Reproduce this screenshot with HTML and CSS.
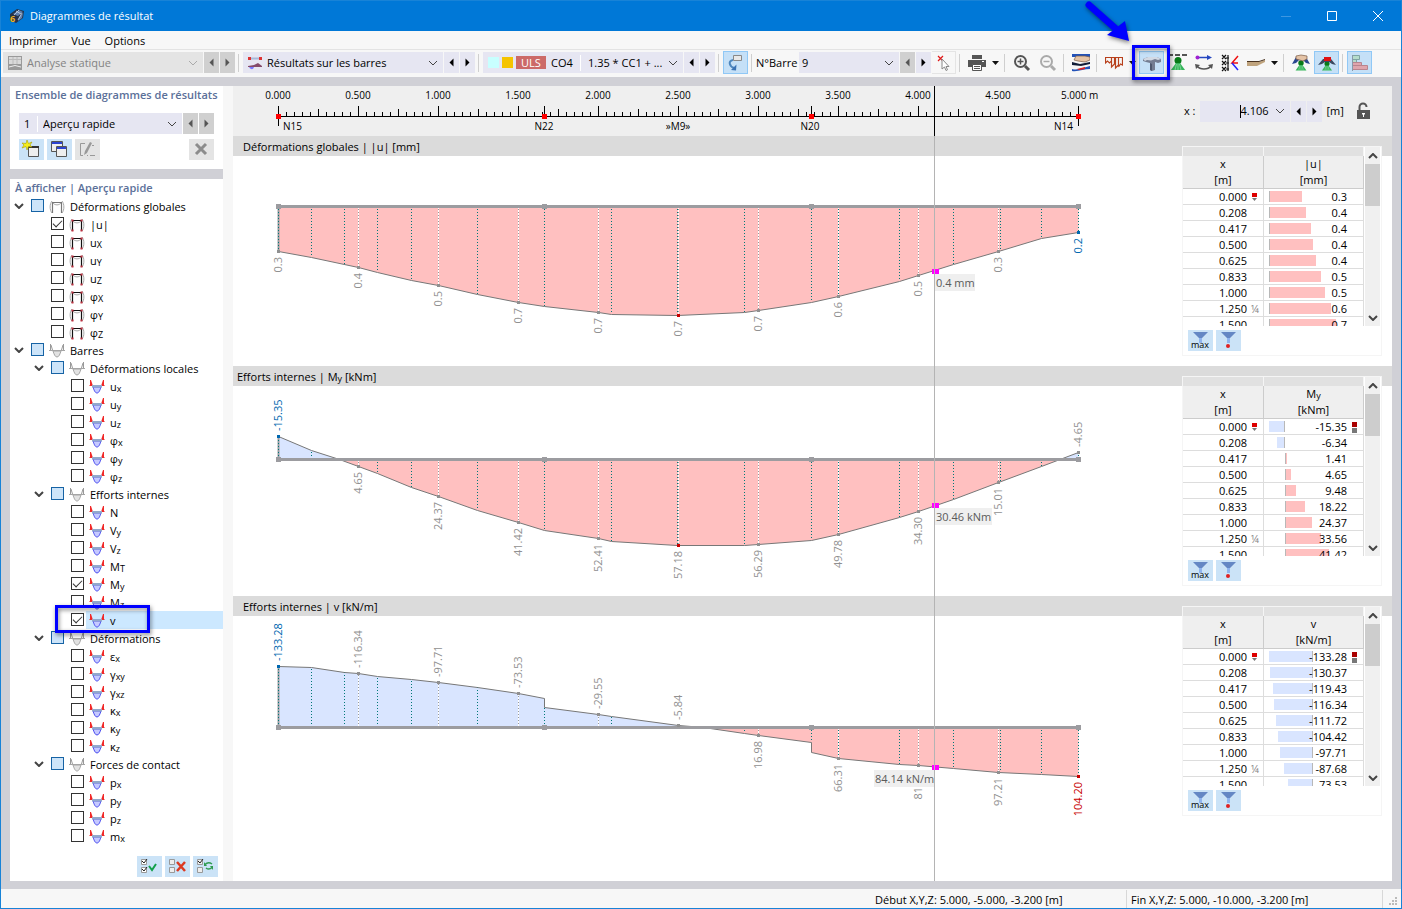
FILE: index.html
```html
<!DOCTYPE html>
<html lang="fr">
<head>
    <meta charset="UTF-8">
    <meta name="viewport" content="width=device-width, initial-scale=1.0">
    <title>Diagrammes de résultat</title>
    <link rel="stylesheet" href="styles.css">
</head>
<body>

    <!-- shared icons -->
    <svg class="sprite" aria-hidden="true">
        <symbol id="i-left" viewBox="0 0 15 21"><path d="M9.500 6.500v8L5.500 10.500z" fill="currentColor"/></symbol>
        <symbol id="i-right" viewBox="0 0 15 21"><path d="M5.500 6.500v8l4-4z" fill="currentColor"/></symbol>
        <symbol id="i-down" viewBox="0 0 10 6"><path d="M1 1l4 4 4-4" fill="none" stroke="currentColor"/></symbol>
        <symbol id="i-caret" viewBox="0 0 11 21"><path d="M2 9h7l-3.500 4z" fill="#111"/></symbol>
        <symbol id="i-frame" viewBox="0 0 16 14">
            <path d="M3 1C.5 4 .5 10 3 13M13 1c2.500 3 2.500 9 0 12M4 3c2 2.500 6 2.500 8 0" fill="none" stroke="#a9a9a9"/>
            <path d="M3.500 13V2.500h9V13" fill="none" stroke="#111" stroke-width="1.200"/>
            <path d="M2.500 1.500h2v2h-2zM11.500 1.500h2v2h-2zM2.500 11.500h2v2h-2zM11.500 11.500h2v2h-2z" fill="#c03040"/>
        </symbol>
        <symbol id="i-frame-off" viewBox="0 0 16 14">
            <path d="M3 1C.5 4 .5 10 3 13M13 1c2.500 3 2.500 9 0 12M4 3c2 2.500 6 2.500 8 0" fill="none" stroke="#a9a9a9"/>
            <path d="M3.500 13V2.500h9V13" fill="none" stroke="#777" stroke-width="1.200"/>
        </symbol>
        <symbol id="i-beam" viewBox="0 0 16 14">
            <path d="M4 7c1 3 2 6 4 6s3-3 4-6z" fill="#c5c9ff" stroke="#4a4cf0"/>
            <path d="M1 0h1l2 6H0l1-1zM15 0h-1l-2 6h4l-1-1z" fill="#f02828"/>
            <path d="M3 5h10v2.500H3z" fill="#92a8cc"/>
        </symbol>
        <symbol id="i-beam-off" viewBox="0 0 16 14">
            <path d="M4 7c1 3 2 6 4 6s3-3 4-6z" fill="#e2e2e2" stroke="#a5a5a5"/>
            <path d="M1.500 0v6M2 1l1.500 5M14.500 0v6M14 1l-1.500 5" fill="none" stroke="#999"/>
            <path d="M0 6.500h16" stroke="#a5a5a5"/>
        </symbol>
        <symbol id="i-funnel" viewBox="0 0 25 21"><path d="M5 2h15l-6 6v5h-3V8z" fill="#6487c4"/><path d="M11 8h3v5h-3z" fill="#8fb4ee"/></symbol>
        <symbol id="i-support" viewBox="0 0 18 18"><circle cx="9" cy="6.500" r="3.500" fill="#087a18"/><path d="M7 9h4l5 7H2z" fill="#35b55a"/><path d="M9 10v6M6 16l1.500-6M12 16l-1.500-6" stroke="#9be0ad" stroke-width=".7"/></symbol>
    </svg>

    <div class="window">
        <header class="titlebar">
            <svg class="app-icon" width="16" height="16" viewBox="0 0 16 16"><path d="M1 6l7-5 7 2-1 7-7 5-6-3z" fill="#23334a"/><path d="M4 6l6-4 4 2-5 4zM10 9l4-4-1 5-4 3z" fill="#5f7fae"/><path d="M7 3l5 3M10 2l-5 5M13 5l-4 7" stroke="#c8d6ea" stroke-width=".8"/><text x="1" y="14" font-size="9" font-weight="bold" fill="#f2b41c">6</text></svg>
            <h1>Diagrammes de résultat</h1>
            <div class="window-buttons">
                <button type="button" aria-label="Réduire"><svg width="12" height="12"><path d="M1 6.500h10" stroke="#3d97e2"/></svg></button>
                <button type="button" aria-label="Agrandir"><svg width="12" height="12"><path d="M1.500 1.500h9v9h-9z" fill="none" stroke="#fff"/></svg></button>
                <button type="button" aria-label="Fermer"><svg width="12" height="12"><path d="M1 1l10 10M11 1L1 11" stroke="#fff"/></svg></button>
            </div>
        </header>

        <nav class="menubar">
            <button type="button">Imprimer</button>
            <button type="button">Vue</button>
            <button type="button">Options</button>
        </nav>

        <div class="toolbar">
            <div class="combo disabled">
                <svg width="14" height="14" viewBox="0 0 14 14"><path d="M0 0h14v14H0z" fill="#9a9a9a"/><path d="M1 1h12v7H1z" fill="#d9d9d9"/><path d="M1 3.500h12M5 1v7M9 1v7" stroke="#bbb"/><path d="M1 11q6-3 12 0" fill="none" stroke="#eee"/></svg>
                <select aria-label="Type d'analyse" disabled><option>Analyse statique</option></select>
                <svg class="chevron" width="10" height="6"><use href="#i-down"/></svg>
            </div>
            <button type="button" class="step off" aria-label="Analyse précédente"><svg><use href="#i-left"/></svg></button>
            <button type="button" class="step off" aria-label="Analyse suivante"><svg><use href="#i-right"/></svg></button>
            <span class="sep"></span>
            <div class="combo">
                <svg width="14" height="14" viewBox="0 0 14 14"><path d="M1 2.500h12" stroke="#a9b9d8" stroke-width="2"/><path d="M0 1h3v3H0zM11 1h3v3h-3z" fill="#d33"/><path d="M0 10l6-1 4-2 4 3v1H0z" fill="#844a6a"/><path d="M1 11c2 3 4 3 5 0z" fill="#77f"/></svg>
                <select aria-label="Résultats"><option>Résultats sur les barres</option></select>
                <svg class="chevron" width="10" height="6"><use href="#i-down"/></svg>
            </div>
            <button type="button" class="step" aria-label="Précédent"><svg><use href="#i-left"/></svg></button>
            <button type="button" class="step" aria-label="Suivant"><svg><use href="#i-right"/></svg></button>
            <span class="sep"></span>
            <div class="combo combo-load">
                <span class="swatch cyan"></span>
                <span class="swatch amber"></span>
                <span class="uls">ULS</span>
                <span class="co">CO4</span>
                <select aria-label="Combinaison"><option>1.35 * CC1 + ...</option></select>
                <svg class="chevron" width="10" height="6"><use href="#i-down"/></svg>
            </div>
            <button type="button" class="step" aria-label="Combinaison précédente"><svg><use href="#i-left"/></svg></button>
            <button type="button" class="step" aria-label="Combinaison suivante"><svg><use href="#i-right"/></svg></button>
            <span class="sep"></span>
            <button type="button" class="tool on" aria-label="Sélection liée"><svg width="18" height="18" viewBox="0 0 18 18"><path d="M6.500 1.500h8v5h-8z" fill="#e8e8e8" stroke="#888"/><path d="M6 6C1 7 2 12 7 14" fill="none" stroke="#4d86bd" stroke-width="2"/><path d="M4 16l5 .5.500-6z" fill="#3a73b5"/></svg></button>
            <span class="sep"></span>
            <label class="bar-label" for="barNo">N°Barre</label>
            <div class="combo combo-bar">
                <select id="barNo"><option>9</option></select>
                <svg class="chevron" width="10" height="6"><use href="#i-down"/></svg>
            </div>
            <button type="button" class="step off" aria-label="Barre précédente"><svg><use href="#i-left"/></svg></button>
            <button type="button" class="step" aria-label="Barre suivante"><svg><use href="#i-right"/></svg></button>
            <button type="button" class="tool framed" aria-label="Choisir une barre"><svg width="18" height="18" viewBox="0 0 18 18"><path d="M3 2l5 5M8 2L3 7" stroke="#e01818" stroke-width="1.200"/><path d="M7 5v10l2.500-2 1.500 3.500 1.500-.7L11 12.500h3z" fill="#fff" stroke="#888"/></svg></button>
            <span class="sep"></span>
            <button type="button" class="tool" aria-label="Imprimer"><svg width="18" height="18" viewBox="0 0 18 18"><path d="M4 1h10v4H4z" fill="#555"/><path d="M0 6h18v7H0z" fill="#555"/><path d="M4.500 10.500h9v6h-9z" fill="#fff" stroke="#555"/><path d="M6 12.500h6M6 14.500h6" stroke="#555"/><path d="M14 7.500h2" stroke="#fff"/></svg></button>
            <button type="button" class="caret" aria-label="Options d'impression"><svg><use href="#i-caret"/></svg></button>
            <span class="sep"></span>
            <button type="button" class="tool" aria-label="Zoom avant"><svg width="18" height="18" viewBox="0 0 18 18"><circle cx="7.500" cy="7.500" r="5.500" fill="none" stroke="#555" stroke-width="2"/><path d="M12 12l4 4" stroke="#555" stroke-width="3"/><path d="M4.500 7.500h6M7.500 4.500v6" stroke="#555" stroke-width="1.500"/></svg></button>
            <button type="button" class="tool" aria-label="Zoom arrière"><svg width="18" height="18" viewBox="0 0 18 18"><circle cx="7.500" cy="7.500" r="5.500" fill="none" stroke="#aaa" stroke-width="2"/><path d="M12 12l4 4" stroke="#aaa" stroke-width="3"/><path d="M4.500 7.500h6" stroke="#aaa" stroke-width="1.500"/></svg></button>
            <span class="sep"></span>
            <button type="button" class="tool" aria-label="Affichage"><svg width="18" height="18" viewBox="0 0 18 18"><path d="M0 0h18v3H0z" fill="#2352b8"/><path d="M4 2h9l5 1v3l-5 2-7-1-4-1z" fill="#e4c3a6" stroke="#7a5a45" stroke-width=".7"/><path d="M0 8l8 2 10-2v2l-9 2-9-1z" fill="#111c38"/><path d="M0 17v-2c6 2 12-2 18-3v3c-6 0-12 3-18 2z" fill="#2352b8"/><path d="M5 15l8-2v2l-6 1z" fill="#d22"/></svg></button>
            <span class="sep"></span>
            <button type="button" class="tool" aria-label="Valeurs"><svg width="18" height="18" viewBox="0 0 18 18"><path d="M0 3.500h18M.5 3v6l2-2 2 2 2-2V3.500M6.500 7v6l3-3V3.500M10.500 3.500V14l3-3V3.500M17.500 3v8l-2-1-2 3" fill="none" stroke="#b8401c" stroke-width="1.200"/></svg></button>
            <button type="button" class="caret" aria-label="Options des valeurs"><svg><use href="#i-caret"/></svg></button>
            <div class="marked">
                <button type="button" class="tool on" aria-label="Section"><svg width="20" height="18" viewBox="0 0 20 18"><path d="M1 5l5-2h9l4 2v3l-3 1-3-1v8l-3 1-2-1V9L4 8 1 7z" fill="#747d92"/><path d="M1 5l5-2h9l4 2-3 1-3-1-4 1.500L5 6 3 7z" fill="#d2d9e4"/><path d="M8 9l2 1v7l-2-1z" fill="#4e586e"/></svg></button>
            </div>
            <button type="button" class="tool" aria-label="Appuis"><svg width="18" height="18" viewBox="0 0 18 18"><path d="M0 1h4M6 1h5M13 1h5" stroke="#555" stroke-width="2"/><use href="#i-support" width="18" height="18"/></svg></button>
            <button type="button" class="tool" aria-label="Orientation"><svg width="18" height="18" viewBox="0 0 18 18"><path d="M2 3.500h11" stroke="#2446c0" stroke-width="1.500"/><path d="M12 1l5 2.500L12 6z" fill="#2446c0"/><circle cx="2.500" cy="3.500" r="2" fill="#a020d0"/><path d="M2 12c3 4 11 4 14 0" fill="none" stroke="#555" stroke-width="1.500"/><path d="M0 10l5 1-4 4zM18 10l-5 1 4 4z" fill="#555"/></svg></button>
            <button type="button" class="tool" aria-label="Divisions"><svg width="18" height="18" viewBox="0 0 18 18"><path d="M1 1l4 4M5 1L1 5M1 7l4 4M5 7l-4 4M1 13l4 4M5 13l-4 4M7 1v16M5 4h3M5 9h3M5 15h3" stroke="#111" stroke-width="1.200"/><path d="M17 2l-6 7h6" fill="none" stroke="#e11" stroke-width="1.500"/><path d="M11 9l6 7" stroke="#22f" stroke-width="1.500"/></svg></button>
            <button type="button" class="tool" aria-label="Lissage"><svg width="18" height="18" viewBox="0 0 18 18"><path d="M0 8h12l6-2v2L10 12H0z" fill="#c0a47e"/><path d="M0 7.500h12l6-2" fill="none" stroke="#4a3422"/></svg></button>
            <button type="button" class="caret" aria-label="Options de lissage"><svg><use href="#i-caret"/></svg></button>
            <span class="sep"></span>
            <button type="button" class="tool" aria-label="Vue de l'appui"><svg width="18" height="18" viewBox="0 0 18 18"><use href="#i-support" y="4" width="18" height="14"/><path d="M0 10L4 3h10l4 7-4-1-3-3H7L4 9z" fill="#2a4790"/><path d="M4 2l5-1 6 1v3l-4 2-7-2z" fill="#e4c3a6" stroke="#7a5a45" stroke-width=".7"/></svg></button>
            <button type="button" class="tool on" aria-label="Extrêmes"><svg width="18" height="18" viewBox="0 0 18 18"><use href="#i-support" y="5" width="18" height="13"/><path d="M0 11l5-6h8l5 6-4-1-3-2H7l-3 2z" fill="#3a4860"/><path d="M6 3h7v4H6z" fill="#e01010"/></svg></button>
            <span class="sep"></span>
            <button type="button" class="tool on" aria-label="Tableaux"><svg width="18" height="18" viewBox="0 0 18 18"><path d="M1.500 1.500h7v4h-7zM1.500 5.500h4v5h-4z" fill="#b5dccb" stroke="#7fa5a5"/><path d="M1.500 8.500h9v3h-9zM1.500 11.500h15v4h-15z" fill="#dfa5ad" stroke="#b9848e"/><path d="M1.500 1v16" stroke="#8899aa"/></svg></button>
        </div>

        <div class="workspace">
            <aside class="sidebar">
                <section class="panel set-panel">
                    <h2>Ensemble de diagrammes de résultats</h2>
                    <div class="set-row">
                        <div class="combo combo-set">
                            <span class="num">1</span>
                            <select aria-label="Ensemble"><option>Aperçu rapide</option></select>
                            <svg class="chevron" width="10" height="6"><use href="#i-down"/></svg>
                        </div>
                        <button type="button" class="step off" aria-label="Ensemble précédent"><svg><use href="#i-left"/></svg></button>
                        <button type="button" class="step off" aria-label="Ensemble suivant"><svg><use href="#i-right"/></svg></button>
                    </div>
                    <div class="set-actions">
                        <button type="button" class="act" aria-label="Nouveau"><svg width="25" height="21"><path d="M9.500 7.500h10v10h-10z" fill="#eee" stroke="#555"/><path d="M9 7h11v2H9z" fill="#333"/><path d="M8 1l1.500 3.500L13 3l-2 3 2 2-3.500-.5L8 11 7 7.500 3 9l2-3-2-2 4 .5z" fill="#f6ee18" stroke="#a9a000" stroke-width=".6"/></svg></button>
                        <button type="button" class="act" aria-label="Copier"><svg width="25" height="21"><path d="M4.500 2.500h11v10h-11z" fill="#eee" stroke="#555"/><path d="M5 3h10v2H5z" fill="#2c44d0"/><path d="M9.500 7.500h10v10h-10z" fill="#eee" stroke="#555"/><path d="M10 8h9v2h-9z" fill="#2c44d0"/></svg></button>
                        <button type="button" class="act off" aria-label="Modifier"><svg width="25" height="21"><path d="M10 4.500H5.500v12H8M12 16.500h1M15 16.500h5M17 6.500h2" fill="none" stroke="#999"/><path d="M15 3l2 1-5 10-3 2 1-4z" fill="#999"/></svg></button>
                        <button type="button" class="act off delete" aria-label="Supprimer"><svg width="25" height="21"><path d="M7 5l10 10M17 5L7 15" stroke="#8c8c8c" stroke-width="3"/></svg></button>
                    </div>
                </section>

                <section class="panel tree-panel">
                    <h2>À afficher | Aperçu rapide</h2>
                    <ul class="tree" id="tree"></ul>
                    <div class="tree-actions">
                        <button type="button" class="act" aria-label="Tout cocher"><svg width="25" height="21"><path d="M4.500 3.500h5v5h-5zM4.500 11.500h5v5h-5z" fill="#fff" stroke="#999"/><path d="M5 5l2 2 3-4M5 13l2 2 3-4" fill="none" stroke="#222"/><path d="M12 10l3 4 4-6" fill="none" stroke="#12a04a" stroke-width="2"/></svg></button>
                        <button type="button" class="act" aria-label="Tout décocher"><svg width="25" height="21"><path d="M4.500 3.500h5v5h-5zM4.500 11.500h5v5h-5z" fill="#eee" stroke="#999"/><path d="M12 6l8 9M20 6l-8 9" stroke="#dc3a22" stroke-width="2.500"/></svg></button>
                        <button type="button" class="act" aria-label="Inverser"><svg width="25" height="21"><path d="M4.500 3.500h5v5h-5zM4.500 11.500h5v5h-5z" fill="#eee" stroke="#999"/><path d="M5 5l2 2 3-4" fill="none" stroke="#222"/><path d="M12 8.500c2-2 5-2 7-.5M19 11.500c-2 2-4 2-6 .5" fill="none" stroke="#2f9b50" stroke-width="1.500"/><path d="M11 6v4h3zM20 14v-4h-3z" fill="#2f9b50"/></svg></button>
                    </div>
                </section>
            </aside>

            <main class="results">
                <div class="ruler-row">
                    <svg class="ruler" id="ruler" role="img" aria-label="Position sur la barre"></svg>
                    <div class="position">
                        <label for="posX">x :</label>
                        <div class="combo combo-x">
                            <input id="posX" type="text" value="4.106">
                            <svg class="chevron" width="10" height="6"><use href="#i-down"/></svg>
                        </div>
                        <button type="button" class="step" aria-label="Reculer"><svg><use href="#i-left"/></svg></button>
                        <button type="button" class="step" aria-label="Avancer"><svg><use href="#i-right"/></svg></button>
                        <span class="unit">[m]</span>
                        <button type="button" class="lock" aria-label="Verrouiller"><svg width="14" height="18" viewBox="0 0 14 18"><path d="M2.500 8V5a3.500 3.500 0 0 1 7 0" fill="none" stroke="#555" stroke-width="2"/><path d="M0 8h13v9H0z" fill="#555"/><path d="M5 11h3v1.500H7V15H6v-2.500H5z" fill="#fff"/></svg></button>
                    </div>
                </div>
                <div id="sections" class="sections"></div>
                <div class="cursor-line"></div>
            </main>
        </div>

        <footer class="statusbar">
            <span class="cell">Début X,Y,Z: 5.000, -5.000, -3.200 [m]</span>
            <span class="cell">Fin X,Y,Z: 5.000, -10.000, -3.200 [m]</span>
            <svg class="grip" width="9" height="9"><path d="M6 0h2v2H6zM3 3h2v2H3zM6 3h2v2H6zM0 6h2v2H0zM3 6h2v2H3zM6 6h2v2H6z" fill="#bbb"/></svg>
        </footer>

        <svg class="pointer" width="50" height="48" aria-hidden="true"><path d="M5 5l26 23" stroke="#0000ff" stroke-width="7" stroke-linecap="round"/><path d="M45 41l-22-6 18-14z" fill="#0000ff"/></svg>
    </div>

    <script src="app.js"></script>
</body>
</html>
```

FILE: styles.css
```css
*, *::before, *::after {
    box-sizing: border-box;
}

body {
    margin: 0;
    font-family: "Open Sans", "Noto Sans", sans-serif;
    font-size: 11px;
    line-height: 16px;
    color: #000;
}

button, select, input {
    font: inherit;
    color: inherit;
    margin: 0;
    padding: 0;
    border: 0;
    border-radius: 0;
    background: none;
}

select, input {
    appearance: none;
    outline: none;
    min-width: 0;
    flex: 1;
}

button svg {
    display: block;
}

h1, h2, ul {
    margin: 0;
    padding: 0;
    font-size: 11px;
    list-style: none;
}

sub {
    font-size: 9px;
    line-height: 0;
    vertical-align: -1px;
}

.sprite {
    display: none;
}

.window {
    position: relative;
    display: flex;
    flex-direction: column;
    min-height: 100vh;
    border: 1px solid #1883d7;
    background: #f7f7f7;
}

/* title and menu */
.titlebar {
    display: flex;
    align-items: center;
    height: 30px;
    padding-left: 8px;
    background: #0078d7;
    color: #fff;
}

.titlebar h1 {
    margin-left: 5px;
    font-weight: 400;
}

.window-buttons {
    display: flex;
    margin-left: auto;
}

.window-buttons button {
    width: 46px;
    height: 30px;
    display: grid;
    place-items: center;
}

.menubar {
    display: flex;
    gap: 14px;
    height: 19px;
    padding: 2px 8px 0;
    border-bottom: 1px solid #e3e3e3;
}

/* toolbar */
.toolbar {
    display: flex;
    align-items: center;
    gap: 1px;
    height: 27px;
    padding: 0 2px 2px;
}

.combo {
    display: flex;
    align-items: center;
    width: 200px;
    height: 21px;
    padding: 0 5px;
    gap: 5px;
    background: #e6e6f2;
}

.combo.disabled {
    background: #e4e4e4;
    color: #838383;
}

.combo select:disabled {
    opacity: 1;
}

.chevron {
    flex: none;
    color: #444;
}

.disabled .chevron {
    color: #aaa;
}

.step {
    flex: none;
    width: 15px;
    height: 21px;
    background: #e6e6f2;
}

.step svg {
    width: 15px;
    height: 21px;
}

.step.off {
    background: #d0d0d0;
    color: #555;
}

.sep {
    flex: none;
    width: 1px;
    height: 18px;
    margin: 0 3px 0 2px;
    background: #cfcfcf;
}

.swatch {
    width: 11px;
    height: 11px;
    flex: none;
}

.cyan {
    background: #c8ffff;
}

.amber {
    background: #f5c400;
}

.combo-load {
    gap: 3px;
}

.uls {
    width: 30px;
    height: 13px;
    line-height: 13px;
    text-align: center;
    background: #cc6a68;
    color: #fff;
}

.co {
    width: 32px;
    padding-left: 2px;
    border-right: 1px solid #fff;
}

.combo-load select {
    padding-left: 4px;
}

.bar-label {
    width: 42px;
}

.combo-bar {
    width: 100px;
    padding-left: 3px;
}

.tool {
    flex: none;
    display: grid;
    place-items: center;
    width: 25px;
    height: 23px;
}

.tool.on {
    border: 1px solid #90c8f6;
    background: #c5e0f7;
}

.tool.framed {
    width: 24px;
    border: 1px solid #e4e4e4;
    border-left: 0;
}

.caret {
    width: 11px;
    height: 21px;
}

.caret svg {
    width: 11px;
    height: 21px;
}

/* blue callouts */
.marked {
    position: relative;
}

.marked::after {
    content: "";
    position: absolute;
    inset: -6px -6px -6px -7px;
    border: 3px solid #0000ff;
    filter: drop-shadow(1px 2px 2px rgba(0, 0, 0, 0.5));
    z-index: 2;
    pointer-events: none;
}

.pointer {
    position: absolute;
    top: -1px;
    right: 267px;
    filter: drop-shadow(1px 2px 2px rgba(0, 0, 0, 0.5));
    z-index: 3;
}

/* workspace */
.workspace {
    flex: 1;
    display: flex;
    padding: 9px 9px 8px;
    background: #d0d0d6;
}

.sidebar {
    flex: none;
    width: 213px;
    display: flex;
    flex-direction: column;
    gap: 10px;
}

.panel {
    background: #fff;
}

.panel h2 {
    padding: 1px 5px;
    font-weight: 600;
    color: #5b7099;
    white-space: nowrap;
}

.set-panel {
    height: 83px;
}

.set-row {
    display: flex;
    gap: 1px;
    margin: 9px 9px 5px;
}

.set-row .combo {
    flex: 1;
}

.num {
    width: 14px;
    border-right: 1px solid #fff;
}

.set-actions, .tree-actions {
    display: flex;
    gap: 3px;
    margin: 0 9px;
}

.act {
    width: 25px;
    height: 21px;
    background: #cbe3f7;
}

.act.off {
    background: #e4e4e4;
}

.delete {
    margin-left: auto;
}

.tree-panel {
    flex: 1;
    display: flex;
    flex-direction: column;
}

.tree-actions {
    justify-content: flex-end;
    margin: auto 5px 4px;
}

.tree li {
    display: flex;
    height: 18px;
    position: relative;
}

.tree .toggle {
    width: 21px;
    padding-left: 4px;
    color: #444;
}

.toggle svg, .scroll svg {
    stroke-width: 2px;
}

.level-1 {
    padding-left: 20px;
}

.level-2 {
    padding-left: 40px;
}

.tree input {
    flex: none;
    width: 13px;
    height: 13px;
    margin-top: 2px;
    border: 1px solid #333;
    background: #fff;
}

.tree input.partial {
    border-color: #1663a5;
    background: #cce4f9;
}

.tree input:checked::before {
    content: "";
    display: block;
    width: 9px;
    height: 5px;
    margin: 2px 1px;
    border: solid #333;
    border-width: 0 0 1px 1px;
    transform: rotate(-45deg);
}

.tree label {
    flex: 1;
    display: flex;
    gap: 5px;
    margin-left: 2px;
    padding: 0 0 0 3px;
    line-height: 20px;
    white-space: nowrap;
}

.tree label svg {
    flex: none;
    width: 16px;
    height: 14px;
    margin-top: 3px;
}

.tree .selected label {
    background: #cce8ff;
}

.tree .selected::after {
    content: "";
    position: absolute;
    left: 45px;
    top: -6px;
    width: 95px;
    height: 28px;
    border: 3px solid #0000ff;
    filter: drop-shadow(1px 2px 2px rgba(0, 0, 0, 0.5));
    z-index: 2;
    pointer-events: none;
}

/* results */
.results {
    position: relative;
    flex: 1;
    min-width: 0;
    display: flex;
    flex-direction: column;
    border-left: 10px solid #f7f7f7;
    background: #fff;
}

.ruler-row, .section {
    display: grid;
    grid-template-columns: minmax(0, 1fr) 200px;
    padding-right: 10px;
}

.ruler-row {
    height: 50px;
    background: #efefef;
}

.ruler, .chart {
    display: block;
    width: 100%;
    height: 100%;
    overflow: hidden;
}

.ruler text {
    font-size: 10px;
}

.position {
    display: flex;
    align-items: center;
    gap: 1px;
    padding-left: 2px;
}

.combo-x {
    width: 90px;
    margin-left: 3px;
    justify-content: flex-end;
    gap: 6px;
}

.combo-x input {
    flex: none;
    width: 29px;
    height: 13px;
    text-align: right;
    border-left: 1px solid #000;
}

.unit {
    margin-left: 4px;
}

.lock {
    margin-left: 12px;
}

.sections {
    flex: 1;
    display: flex;
    flex-direction: column;
}

.section {
    grid-template-rows: 20px 210px;
}

.section:last-child {
    flex: 1;
    grid-template-rows: 20px 1fr;
}

.band {
    grid-area: 1 / 1 / 2 / 3;
    margin-right: -10px;
    padding: 3px 10px 0;
    background: #dbdbdb;
}

.band-wide {
    padding-left: 4px;
}

.chart {
    grid-area: 2 / 1;
}

.chart text {
    fill: #909090;
}

.chart .min {
    fill: #0068b0;
}

.chart .max {
    fill: #c80000;
}

.chart .value {
    fill: #5a5a5a;
}

.table-box {
    grid-area: 1 / 2 / 3 / 3;
    align-self: start;
    margin-top: 10px;
    height: 210px;
    border: 1px solid #f5f5f5;
    background: #fff;
}

.table-view {
    display: flex;
    height: 179px;
    overflow: hidden;
}

.table-view table {
    width: 181px;
    table-layout: fixed;
    border-spacing: 0;
    line-height: 15px;
}

.table-view th {
    padding: 0;
    height: 16px;
    line-height: 16px;
    font-weight: 400;
    background: #efefef;
    border-right: 1px solid #ccc;
}

.table-view .strip th {
    height: 9px;
    background: #e1e1e1;
    border-color: #f5f5f5;
}

.table-view thead tr:last-child th {
    border-bottom: 1px solid #ccc;
}

.col-x {
    width: 81px;
}

.table-view td {
    position: relative;
    height: 16px;
    padding: 0 16px 0 0;
    text-align: right;
    border-right: 1px solid #ddd;
    border-bottom: 1px solid #ddd;
}

.bar {
    position: absolute;
    top: 2px;
    height: 11px;
}

.bar.pos {
    background: #ffc0c0;
    border-left: 1px solid #b8b8b8;
}

.bar.neg {
    background: #d9e5ff;
    border-right: 1px solid #b8b8b8;
}

.figure {
    position: relative;
}

.flag {
    position: absolute;
    right: 5px;
    top: 3px;
    width: 6px;
    height: 11px;
}

.quarter {
    position: absolute;
    right: 4px;
    color: #888;
}

.scroll {
    flex: none;
    display: flex;
    flex-direction: column;
    align-items: center;
    width: 15px;
    margin-left: 1px;
    padding: 6px 0 5px;
    background: #f0f0f0;
    color: #444;
}

.scroll .thumb {
    width: 15px;
    height: 42px;
    margin: 5px 0 auto;
    background: #cdcdcd;
}

.scroll .up {
    transform: rotate(180deg);
}

.table-tools {
    display: flex;
    gap: 3px;
    padding: 4px 5px;
}

.cursor-line {
    position: absolute;
    left: 701px;
    top: 50px;
    bottom: 0;
    width: 1px;
    background: #b4b4b4;
}

/* status bar */
.statusbar {
    display: flex;
    align-items: center;
    justify-content: flex-end;
    height: 19px;
}

.cell {
    width: 256px;
    padding: 2px 4px 0;
    border-right: 1px solid #d8d8d8;
}

.grip {
    margin: 6px 3px 0 6px;
}
```

FILE: app.js
```js
document.addEventListener('DOMContentLoaded', function () {
    const leaf = (level, icon, names, checked = []) =>
        names.map(name => ({ level, icon, name, checked: checked.includes(name) }));
    const group = (level, icon, name) => ({ level, icon, name, group: true });

    const treeItems = [
        group(0, 'frame-off', 'Déformations globales'),
        ...leaf(1, 'frame', ['|u|', 'u_X', 'u_Y', 'u_Z', 'φ_X', 'φ_Y', 'φ_Z'], ['|u|']),
        group(0, 'beam-off', 'Barres'),
        group(1, 'beam-off', 'Déformations locales'),
        ...leaf(2, 'beam', ['u_x', 'u_y', 'u_z', 'φ_x', 'φ_y', 'φ_z']),
        group(1, 'beam-off', 'Efforts internes'),
        ...leaf(2, 'beam', ['N', 'V_y', 'V_z', 'M_T', 'M_y', 'M_z', 'v'], ['M_y', 'v']),
        group(1, 'beam-off', 'Déformations'),
        ...leaf(2, 'beam', ['ε_x', 'γ_xy', 'γ_xz', 'κ_x', 'κ_y', 'κ_z']),
        group(1, 'beam-off', 'Forces de contact'),
        ...leaf(2, 'beam', ['p_x', 'p_y', 'p_z', 'm_x'])
    ];

    const withSub = name => name.replace(/_(\w+)/, '<sub>$1</sub>');

    document.getElementById('tree').innerHTML = treeItems.map((item, i) => `
        <li class="level-${item.level} ${item.name === 'v' ? 'selected' : ''}">
            ${item.group
                ? `<button type="button" class="toggle" aria-label="Replier ${item.name}"><svg width="10" height="6"><use href="#i-down"/></svg></button>`
                : '<span class="toggle"></span>'}
            <input type="checkbox" id="item${i}" class="${item.group ? 'partial' : ''}" ${item.checked ? 'checked' : ''}>
            <label for="item${i}"><svg><use href="#i-${item.icon}"/></svg><span>${withSub(item.name)}</span></label>
        </li>`).join('');

    // ruler: 160px per metre
    const X0 = 45;
    const CURSOR = 701;

    function drawRuler() {
        let out = '';
        for (let i = 0; i <= 100; i++) {
            const x = X0 + i * 8;
            const top = i % 10 === 0 ? 20 : i % 5 === 0 ? 23 : 26;
            out += `<path d="M${x + 0.5} ${top}V30" stroke="#000"/>`;
        }
        for (let m = 0; m < 10; m++) {
            out += `<text x="${X0 + m * 80}" y="13" text-anchor="middle">${(m / 2).toFixed(3)}</text>`;
        }
        out += '<text x="828" y="13">5.000 m</text>';
        out += '<path d="M45 30.5h801M45.5 20v20M845.5 20v20M311.5 20v10M578.5 20v10" stroke="#000"/>';
        [45, 311, 578, 845].forEach(x => {
            out += `<rect x="${x - 2}" y="28" width="5" height="5" fill="#f00"/>`;
        });
        [[50, 'N15', 'start'], [311, 'N22', 'middle'], [445, '»M9»', 'middle'], [577, 'N20', 'middle'], [840, 'N14', 'end']].forEach(([x, t, a]) => {
            out += `<text x="${x}" y="44" text-anchor="${a}">${t}</text>`;
        });
        out += `<path d="M${CURSOR + 0.5} 0v26M${CURSOR + 0.5} 31v19" stroke="#000"/>`;
        document.getElementById('ruler').innerHTML = out;
    }

    // result diagrams, points are [x, y] in pixels
    const division = [45, 78, 111, 144, 178, 244, 311, 378, 444, 511, 578, 605, 666, 720, 767, 808, 845];
    const rulerX = ['0.000', '0.208', '0.417', '0.500', '0.625', '0.833', '1.000', '1.250', '1.500'];

    const diagrams = [
        {
            title: 'Déformations globales | |u| [mm]', symbol: '|u|', unit: '[mm]', base: 50,
            points: [[45, 95], [78, 101], [125, 111], [144, 116], [178, 124], [205, 129], [244, 138], [285, 146], [311, 150], [365, 156], [378, 158], [444, 159], [511, 156], [525, 154], [578, 146], [605, 140], [666, 125], [685, 119], [720, 108], [765, 95], [808, 82], [845, 76]],
            labels: ['0.3', '0.4', '0.5', '0.7', '0.7', '0.7', '0.7', '0.6', '0.5', '0.3', '0.2'],
            min: 10, max: 5, cursorY: 115, value: '0.4 mm', valueX: 702, valueY: 118, valueW: 40,
            zero: 5, bars: [33, 37, 42, 44, 47, 52, 56, 62, 67],
            values: ['0.3', '0.4', '0.4', '0.4', '0.4', '0.5', '0.5', '0.6', '0.7']
        },
        {
            title: 'Efforts internes | M_y [kNm]', symbol: 'M_y', unit: '[kNm]', base: 73, wide: true,
            points: [[45, 50], [78, 64], [106, 73], [125, 80], [144, 87], [178, 101], [205, 110], [244, 124], [285, 136], [311, 144], [365, 152], [378, 155], [444, 159], [511, 159], [525, 158], [578, 154], [605, 148], [666, 131], [685, 125], [720, 113], [765, 96], [808, 80], [845, 66]],
            labels: ['-15.35', '4.65', '24.37', '41.42', '52.41', '57.18', '56.29', '49.78', '34.30', '15.01', '-4.65'],
            min: 0, max: 5, cursorY: 119, value: '30.46 kNm', valueX: 702, valueY: 122, valueW: 57,
            zero: 21, bars: [-16, -8, 2, 6, 11, 20, 27, 36, 44],
            values: ['-15.35', '-6.34', '1.41', '4.65', '9.48', '18.22', '24.37', '33.56', '41.42']
        },
        {
            title: 'Efforts internes | v [kN/m]', symbol: 'v', unit: '[kN/m]', base: 111,
            points: [[45, 50], [78, 51], [111, 56], [125, 57], [144, 60], [178, 63], [205, 66], [244, 71], [285, 77], [311, 82], [311, 91], [365, 98], [378, 100], [445, 109], [470, 111], [511, 117], [525, 119], [578, 126], [578, 136], [605, 142], [666, 148], [685, 149], [720, 152], [765, 156], [808, 158], [845, 160]],
            labels: ['-133.28', '-116.34', '-97.71', '-73.53', '-29.55', '-5.84', '16.98', '66.31', '81', '97.21', '104.20'],
            min: 0, max: 10, cursorY: 151, value: '84.14 kN/m', valueX: 641, valueY: 154, valueW: 60,
            zero: 49, bars: [-44, -43, -40, -39, -37, -35, -33, -29, -25],
            values: ['-133.28', '-130.37', '-119.43', '-116.34', '-111.72', '-104.42', '-97.71', '-87.68', '-73.53']
        }
    ];

    function yAt(points, x) {
        for (let i = 1; i < points.length; i++) {
            const [x1, y1] = points[i - 1];
            const [x2, y2] = points[i];
            if (x <= x2 && x2 > x1) {
                return Math.round(y1 + (y2 - y1) * (x - x1) / (x2 - x1));
            }
        }
        return points[points.length - 1][1];
    }

    function drawChart(d, n) {
        const line = d.points.map(([x, y]) => `${x + 0.5},${y + 0.5}`).join(' ');
        const area = `45.5,${d.base} ${line} 845.5,${d.base}`;
        let out = `
            <clipPath id="above${n}"><rect width="100%" height="${d.base}"/></clipPath>
            <clipPath id="below${n}"><rect y="${d.base}" width="100%" height="200"/></clipPath>
            <polygon points="${area}" fill="#d9e5ff" clip-path="url(#above${n})"/>
            <polygon points="${area}" fill="#ffc0c0" clip-path="url(#below${n})"/>
            <path d="M45.5 ${d.base}V${d.points[0][1]}" stroke="#9c9ca0" stroke-width="2"/>`;
        for (let i = 1; i < 10; i++) {
            const x = X0 + i * 80;
            const path = `M${x + 0.5} ${d.base}V${yAt(d.points, x)}`;
            out += `<path d="${path}" stroke="#fff"/><path d="${path}" stroke="#9a9a9a" stroke-dasharray="1 2"/>`;
        }
        division.forEach(x => {
            out += `<path d="M${x + 0.5} ${d.base}V${yAt(d.points, x)}" stroke="#007878" stroke-dasharray="1 2"/>`;
        });
        out += `<polyline points="${line}" fill="none" stroke="#777"/>
            <path d="M45 ${d.base + 0.5}h801" stroke="#9c9ca0" stroke-width="3"/>`;
        [45, 311, 578, 845].forEach(x => {
            out += `<rect x="${x - 2}" y="${d.base - 2}" width="5" height="5" fill="#9c9ca0"/>`;
        });
        d.labels.forEach((label, i) => {
            const x = X0 + i * 80;
            const y = yAt(d.points, x);
            const up = label[0] === '-';
            const cls = i === d.min ? 'min' : i === d.max && i === 10 ? 'max' : '';
            const fill = i === d.min ? '#0068b0' : i === d.max ? '#c80000' : '#909090';
            const drop = label === '81' ? 22 : 6;
            out += `<rect x="${x - 1}" y="${y - 1}" width="3" height="3" fill="${fill}"/>
                <text class="${cls}" transform="translate(${x + 4} ${up ? y - 5 : y + drop}) rotate(-90)" text-anchor="${up ? 'start' : 'end'}">${label}</text>`;
        });
        out += `<rect x="${CURSOR - 2}" y="${d.cursorY - 2}" width="7" height="5" fill="#f0f"/>
            <rect x="${d.valueX}" y="${d.valueY}" width="${d.valueW}" height="17" fill="#efefef"/>
            <text class="value" x="${d.valueX + 1}" y="${d.valueY + 13}">${d.value}</text>`;
        return `<svg class="chart" role="img" aria-label="Diagramme ${d.symbol.replace('_', '')}">${out}</svg>`;
    }

    function drawTable(d, n) {
        const rows = d.values.map((value, i) => {
            const w = d.bars[i];
            const left = w < 0 ? d.zero + w : d.zero;
            const xFlag = i === 0
                ? '<svg class="flag"><path d="M0 1h5v4H0z" fill="#d00"/><path d="M0 6h5L2.500 9z" fill="#777"/></svg>'
                : i === 7 ? '<span class="quarter">¼</span>' : '';
            const vFlag = i === 0 && n > 0
                ? '<svg class="flag"><path d="M0 0h5v5H0z" fill="#a00"/><path d="M0 6h5v5H0z" fill="#777"/></svg>' : '';
            return `<tr>
                <td>${rulerX[i]}${xFlag}</td>
                <td><span class="bar ${w < 0 ? 'neg' : 'pos'}" style="left: ${left}px; width: ${Math.abs(w)}px"></span><span class="figure">${value}</span>${vFlag}</td>
            </tr>`;
        }).join('');
        return `
            <div class="table-box">
                <div class="table-view">
                    <table>
                        <thead>
                            <tr class="strip"><th class="col-x"></th><th></th></tr>
                            <tr><th>x</th><th>${withSub(d.symbol)}</th></tr>
                            <tr><th>[m]</th><th>${d.unit}</th></tr>
                        </thead>
                        <tbody>${rows}</tbody>
                    </table>
                    <div class="scroll" aria-hidden="true">
                        <svg class="up" width="10" height="6"><use href="#i-down"/></svg>
                        <span class="thumb"></span>
                        <svg width="10" height="6"><use href="#i-down"/></svg>
                    </div>
                </div>
                <div class="table-tools">
                    <button type="button" class="act" aria-label="Filtrer les maximums"><svg width="25" height="21"><use href="#i-funnel"/><text x="12" y="18" font-size="9" text-anchor="middle">max</text></svg></button>
                    <button type="button" class="act" aria-label="Filtrer les points"><svg width="25" height="21"><use href="#i-funnel"/><circle cx="12" cy="16" r="2" fill="#e02020"/></svg></button>
                </div>
            </div>`;
    }

    drawRuler();
    document.getElementById('sections').innerHTML = diagrams.map((d, n) => `
        <section class="section">
            <div class="band ${d.wide ? 'band-wide' : ''}">${withSub(d.title)}</div>
            ${drawChart(d, n)}
            ${drawTable(d, n)}
        </section>`).join('');
});
```
